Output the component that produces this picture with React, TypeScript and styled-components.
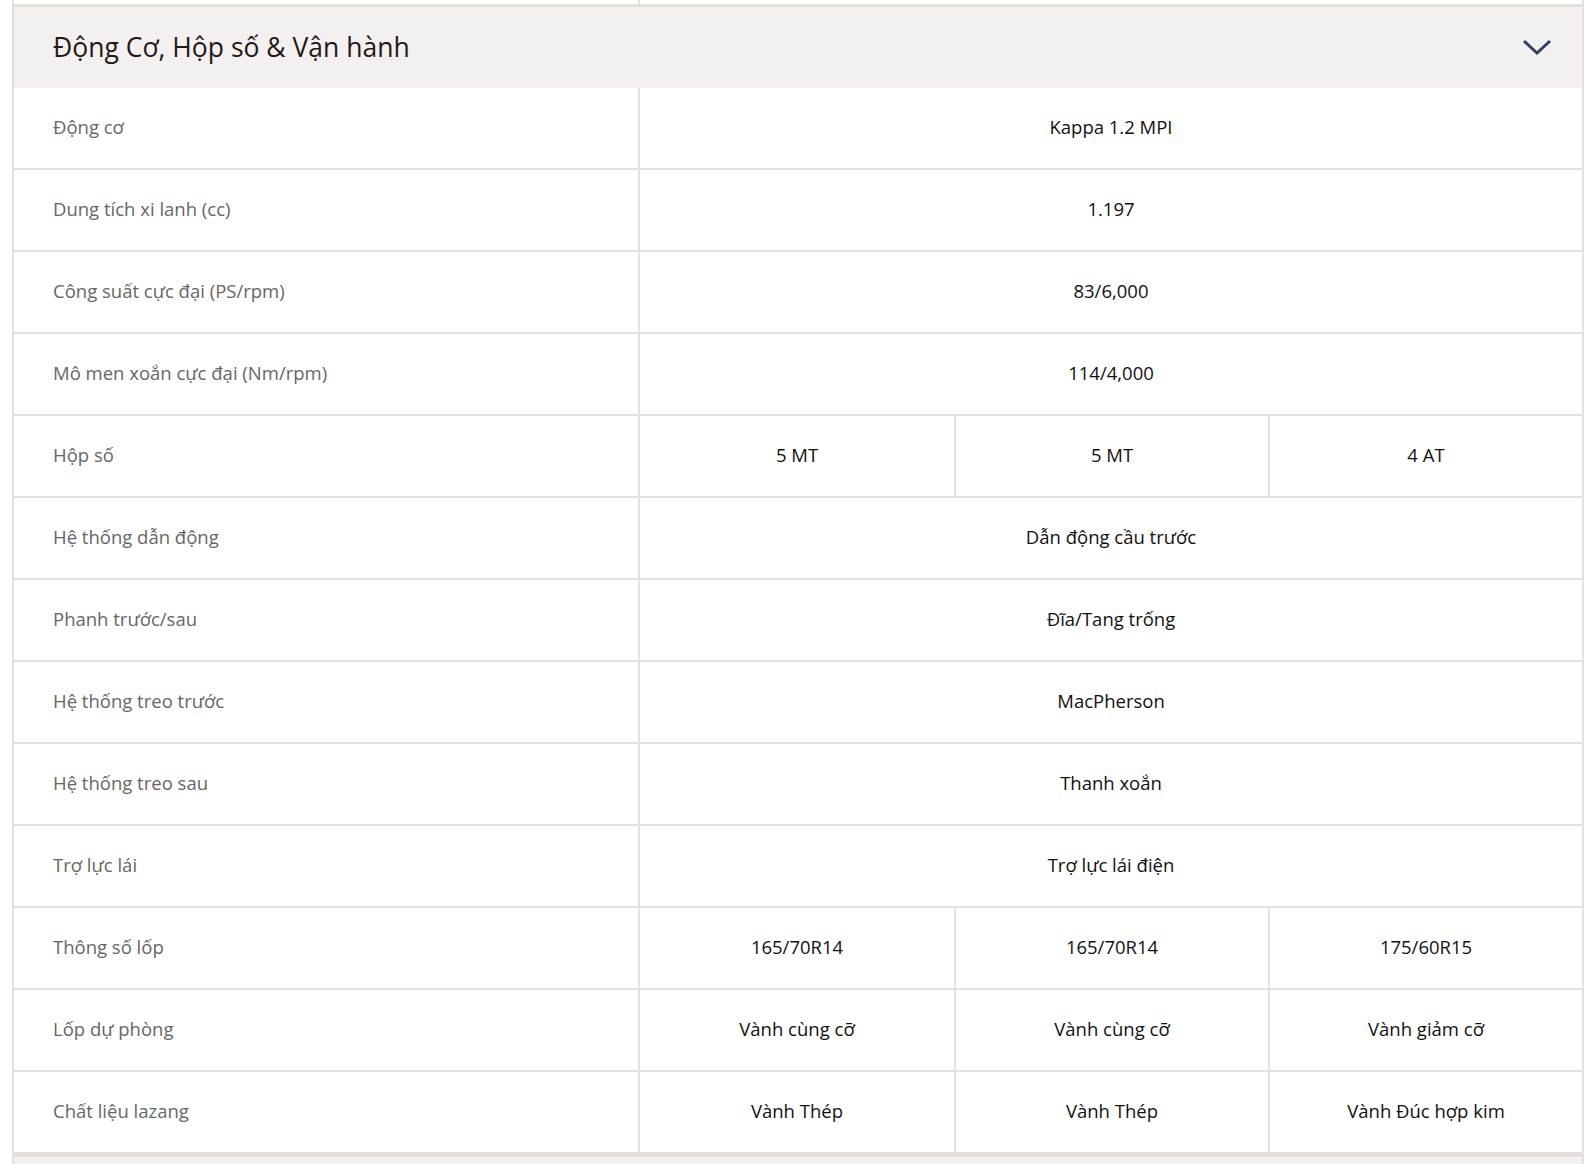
import React from "react";
import styled, { createGlobalStyle } from "styled-components";

const Global = createGlobalStyle`
  html, body { margin: 0; padding: 0; background: #ffffff; }
  body { font-family: "Open Sans", "Noto Sans", sans-serif; }
`;

const Page = styled.div`
  width: 1572px;
  margin-left: 12px;
  height: 1164px;
  overflow: hidden;
`;

const Tail = styled.div`
  display: grid;
  grid-template-columns: 624px 1fr;
  height: 4px;
  border-left: 2px solid #e2e2e2;
  border-right: 2px solid #e2e2e2;
`;

const TailCell = styled.div<{ $divider?: boolean }>`
  border-left: ${(p) => (p.$divider ? "2px solid #e2e2e2" : "none")};
`;

const Section = styled.section`
  display: flex;
  flex-direction: column;
`;

const Header = styled.div`
  display: flex;
  align-items: center;
  justify-content: space-between;
  height: 84px;
  padding: 0 30px 2px 39px;
  box-sizing: border-box;
  background: #f3f1ef;
  border-top: 3px solid #e6dfd9;
  border-left: 2px solid #e6dfd9;
  border-right: 2px solid #e6dfd9;
`;

const Title = styled.h2`
  margin: 0;
  font-family: "Open Sans", "Noto Sans", sans-serif;
  font-weight: 500;
  font-size: 26.5px;
  color: #1f1a17;
  letter-spacing: 0;
`;

const Row = styled.div`
  display: grid;
  grid-template-columns: 624px 1fr;
  height: 80px;
  border-left: 2px solid #e2e2e2;
  border-right: 2px solid #e2e2e2;
  border-bottom: 2px solid #e2e2e2;
`;

const Label = styled.div`
  display: flex;
  align-items: center;
  padding: 0 0 3px 39px;
  font-size: 18.5px;
  color: #666666;
`;

const Values = styled.div<{ $count: number }>`
  display: grid;
  grid-template-columns: repeat(${(p) => p.$count}, 1fr);
  border-left: 2px solid #e2e2e2;
`;

const Value = styled.div`
  display: flex;
  align-items: center;
  justify-content: center;
  padding-bottom: 3px;
  font-size: 18.5px;
  font-weight: 500;
  color: #111111;
  & + & {
    border-left: 2px solid #e2e2e2;
  }
`;

const NextHeader = styled(Header)`
  height: 40px;
`;

const Chevron = () => (
  <svg width="30" height="18" viewBox="0 0 30 18" fill="none">
    <path d="M2 3 L15 15 L28 3" stroke="#2e3f62" strokeWidth="3" />
  </svg>
);

const rows: [string, string[]][] = [
  ["Động cơ", ["Kappa 1.2 MPI"]],
  ["Dung tích xi lanh (cc)", ["1.197"]],
  ["Công suất cực đại (PS/rpm)", ["83/6,000"]],
  ["Mô men xoắn cực đại (Nm/rpm)", ["114/4,000"]],
  ["Hộp số", ["5 MT", "5 MT", "4 AT"]],
  ["Hệ thống dẫn động", ["Dẫn động cầu trước"]],
  ["Phanh trước/sau", ["Đĩa/Tang trống"]],
  ["Hệ thống treo trước", ["MacPherson"]],
  ["Hệ thống treo sau", ["Thanh xoắn"]],
  ["Trợ lực lái", ["Trợ lực lái điện"]],
  ["Thông số lốp", ["165/70R14", "165/70R14", "175/60R15"]],
  ["Lốp dự phòng", ["Vành cùng cỡ", "Vành cùng cỡ", "Vành giảm cỡ"]],
  ["Chất liệu lazang", ["Vành Thép", "Vành Thép", "Vành Đúc hợp kim"]],
];

export default function App() {
  return (
    <>
      <Global />
      <Page>
        <Tail>
          <TailCell />
          <TailCell $divider />
        </Tail>
        <Section>
          <Header>
            <Title>Động Cơ, Hộp số &amp; Vận hành</Title>
            <Chevron />
          </Header>
          {rows.map(([label, vals]) => (
            <Row key={label}>
              <Label>{label}</Label>
              <Values $count={vals.length}>
                {vals.map((v, i) => (
                  <Value key={i}>{v}</Value>
                ))}
              </Values>
            </Row>
          ))}
        </Section>
        <Section>
          <NextHeader />
        </Section>
      </Page>
    </>
  );
}
